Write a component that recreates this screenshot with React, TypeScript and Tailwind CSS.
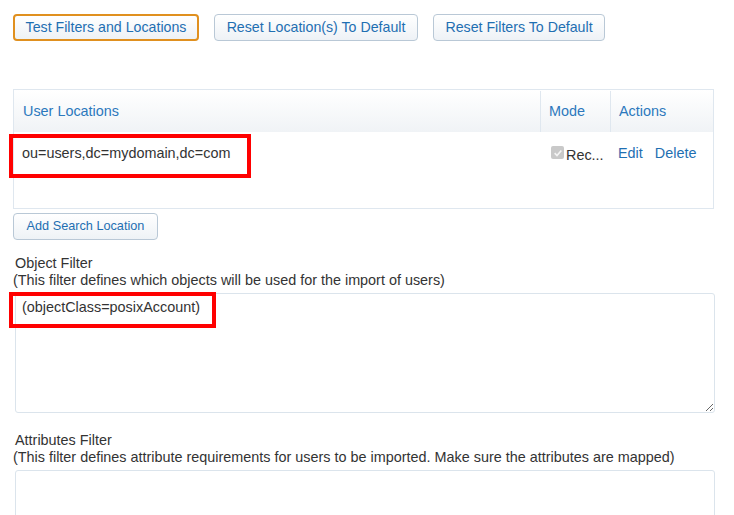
const btn =
  'flex h-[27px] items-center justify-center whitespace-nowrap rounded-[4px] border border-[#b9c8d6] bg-gradient-to-b from-white to-[#eef2f6] text-[#1f6fb2]';

const App = () => {
  return (
    <div className="min-h-[515px] bg-white pl-[13px] pt-[14px] font-['Liberation_Sans',Arial,sans-serif] text-[14.4px] text-[#333]">
      <div className="flex gap-[15px] text-[14.2px]">
        <button className={`${btn} w-[186px] border-2 border-[#e0901f]`}>Test Filters and Locations</button>
        <button className={`${btn} w-[204px]`}>Reset Location(s) To Default</button>
        <button className={`${btn} w-[172px]`}>Reset Filters To Default</button>
      </div>

      <div className="mt-[48px] w-[701px] border border-[#dfe7ef]">
        <div className="flex h-[42px] bg-gradient-to-b from-white to-[#f0f3f6] pt-[1px] text-[#2c78bd]">
          <div className="flex w-[526px] items-center pl-[9px]">User Locations</div>
          <div className="flex w-[70px] items-center border-l border-[#dfe7ef] pl-[8px]">Mode</div>
          <div className="flex flex-1 items-center border-l border-[#dfe7ef] pl-[8px]">Actions</div>
        </div>
        <div className="relative flex h-[76px]">
          <div className="w-[526px] pl-[8px] pt-[11px]">ou=users,dc=mydomain,dc=com</div>
          <div className="flex w-[70px] items-start gap-[2px] pl-[11px] pt-[14px]">
            <span className="flex h-[13px] w-[13px] shrink-0 items-center justify-center rounded-[2px] bg-[#c9c9c9]">
              <svg viewBox="0 0 12 12" className="h-[10px] w-[10px]">
                <path d="M2 6.2 L4.8 9 L10 3" fill="none" stroke="#f4f4f4" strokeWidth="2" />
              </svg>
            </span>
            <span className="-mt-[1px]">Rec...</span>
          </div>
          <div className="flex flex-1 gap-[12px] pl-[8px] pt-[11px] text-[#1f6fb2]">
            <span>Edit</span>
            <span>Delete</span>
          </div>
          <div className="pointer-events-none absolute left-[-5px] top-[2px] h-[44px] w-[242px] border-[4px] border-[#ff0000]" />
        </div>
      </div>

      <div className="mt-[4px] text-[12.7px]">
        <button className={`${btn} w-[145px]`}>Add Search Location</button>
      </div>

      <div className="mt-[15px] pl-[2px] leading-[17px]">Object Filter</div>
      <div className="leading-[17px]">(This filter defines which objects will be used for the import of users)</div>
      <div className="relative mt-[4px] w-[701px] pl-[2px]">
        <textarea
          className="block h-[120px] w-[700px] resize-y rounded-[3px] border border-[#dbe4ec] px-[6px] pt-[3px] outline-none"
          defaultValue="(objectClass=posixAccount)"
        />
        <div className="pointer-events-none absolute left-[-4px] top-[-1px] h-[36px] w-[207px] border-[4px] border-[#ff0000]" />
      </div>

      <div className="mt-[19px] pl-[2px] leading-[17px]">Attributes Filter</div>
      <div className="leading-[17px]">
        (This filter defines attribute requirements for users to be imported. Make sure the attributes are mapped)
      </div>
      <div className="mt-[4px] pl-[2px]">
        <textarea className="block h-[119px] w-[700px] resize-y rounded-[3px] border border-[#dbe4ec] px-[6px] pt-[3px] outline-none" />
      </div>
    </div>
  );
};

export default App;
